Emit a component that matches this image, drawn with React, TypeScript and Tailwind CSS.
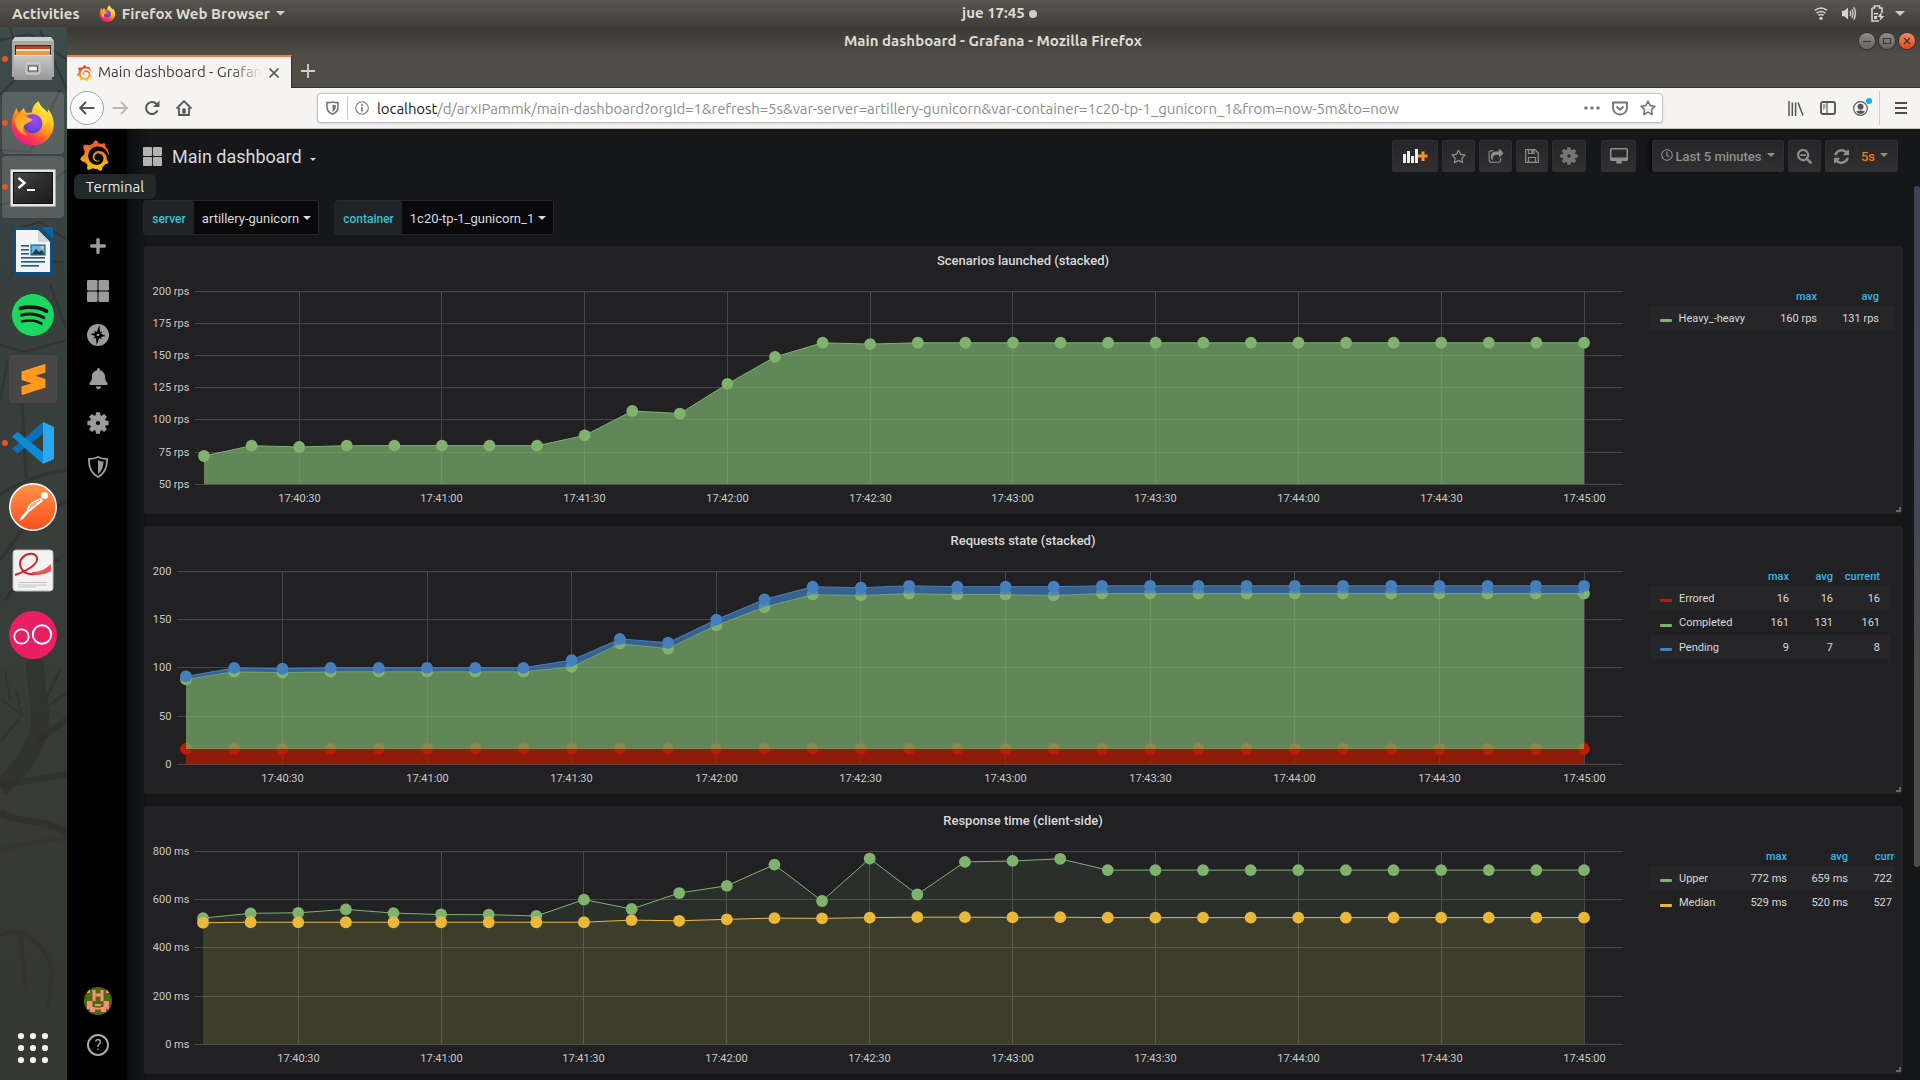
import React from "react";
import { FaRegStar, FaSearchMinus, FaRegClock, FaBell, FaPlus } from "react-icons/fa";
import { SiGrafana, SiSpotify, SiSublimetext } from "react-icons/si";

const UI = "font-['Ubuntu','Open_Sans','Noto_Sans',sans-serif]";

/* ---------- small drawings ---------- */

function Gear({ size, color, hole }: { size: number; color: string; hole: string }) {
  return (
    <svg width={size} height={size} viewBox="-12 -12 24 24">
      {[0, 45, 90, 135, 180, 225, 270, 315].map((a) => (
        <path key={a} d="M-3 -7 L-2.1 -11.6 H2.1 L3 -7Z" fill={color} transform={`rotate(${a})`} />
      ))}
      <circle r="8.6" fill={color} />
      <circle r="2.3" fill={hole} />
    </svg>
  );
}

function Squares({ size, color }: { size: number; color: string }) {
  return (
    <svg width={size} height={size} viewBox="0 0 22 22" fill={color}>
      <rect x="0" y="0" width="10.5" height="10.5" rx="1.3" />
      <rect x="11.5" y="0" width="10.5" height="10.5" rx="1.3" />
      <rect x="0" y="11.5" width="10.5" height="10.5" rx="1.3" />
      <rect x="11.5" y="11.5" width="10.5" height="10.5" rx="1.3" />
    </svg>
  );
}

function FirefoxLogo({ size }: { size: number }) {
  return (
    <svg width={size} height={size} viewBox="30 294 140 144">
      <defs>
        <linearGradient id="ffBody" x1="0.8" y1="0.05" x2="0.25" y2="0.95">
          <stop offset="0" stopColor="#fff44f" />
          <stop offset="0.3" stopColor="#ffc928" />
          <stop offset="0.55" stopColor="#ff8a16" />
          <stop offset="0.78" stopColor="#ff3d45" />
          <stop offset="1" stopColor="#e8198b" />
        </linearGradient>
        <radialGradient id="ffGlobe" cx="0.6" cy="0.3" r="0.8">
          <stop offset="0" stopColor="#a04cf0" />
          <stop offset="0.6" stopColor="#7542e5" />
          <stop offset="1" stopColor="#4a3bbd" />
        </radialGradient>
        <linearGradient id="ffFox" x1="0" y1="0" x2="1" y2="1">
          <stop offset="0" stopColor="#ff9a1c" />
          <stop offset="0.5" stopColor="#ffb52b" />
          <stop offset="1" stopColor="#ff7139" />
        </linearGradient>
      </defs>
      <path d="M48 318 C50 326 53 331 56 335 L72 318 C73 326 76 331 80 334 C88 333 92 334 97 332 C97 318 106 304 118 297 C121 314 136 322 148 334 C146 328 146 326 147 323 C160 338 167 358 165 376 C162 410 134 436 99 436 C62 436 33 408 33 372 C33 350 40 333 48 318Z" fill="url(#ffBody)" />
      <circle cx="99" cy="368" r="30" fill="url(#ffGlobe)" />
      <path d="M42 352 C52 338 68 338 78 346 C86 350 92 351 99 356 C95 363 86 363 82 367 C73 370 68 378 70 388 C72 396 78 402 86 406 C62 404 44 384 42 352Z" fill="url(#ffFox)" />
      <path d="M112 332 C128 340 138 356 134 376 C142 366 146 350 138 338 C132 328 120 326 112 332Z" fill="#ffd43a" />
    </svg>
  );
}

function GrafanaLogo({ size, id, a, b }: { size: number; id: string; a: string; b: string }) {
  return (
    <>
      <svg width="0" height="0" className="absolute">
        <defs>
          <linearGradient id={id} x1="0" y1="0" x2="0" y2="1">
            <stop offset="0.1" stopColor={a} />
            <stop offset="1" stopColor={b} />
          </linearGradient>
        </defs>
      </svg>
      <SiGrafana size={size} className="shrink-0" style={{ fill: `url(#${id})` }} />
    </>
  );
}

function Caret({ color, w = 8 }: { color: string; w?: number }) {
  return (
    <svg width={w} height={w / 2} viewBox="0 0 8 4" className="shrink-0">
      <path d="M0 0H8L4 4Z" fill={color} />
    </svg>
  );
}

/* ---------- dock ---------- */

function FilesIcon() {
  return (
    <svg width="42" height="44" viewBox="0 0 42 44">
      <defs>
        <linearGradient id="fileG" x1="0" y1="0" x2="0" y2="1">
          <stop offset="0" stopColor="#c9c9c9" />
          <stop offset="1" stopColor="#979797" />
        </linearGradient>
      </defs>
      <path d="M3 0H39L42 4V40H0V4Z" fill="#a9a9a9" />
      <path d="M3 0H39L41.5 4H0.5Z" fill="#cfcfcf" />
      <rect x="3" y="8" width="36" height="12" fill="#2f2a26" />
      <rect x="4" y="9" width="34" height="9" fill="#b3471b" />
      <rect x="4" y="12" width="34" height="3" fill="#f3e6d3" />
      <rect x="4" y="14" width="34" height="4" fill="#ee9a3c" />
      <rect x="2" y="18" width="38" height="25" rx="1" fill="url(#fileG)" />
      <rect x="2" y="18" width="38" height="1" fill="#e4e4e4" />
      <rect x="14" y="26" width="14" height="11" rx="2" fill="#b4b4b4" stroke="#d6d6d6" />
      <rect x="16.5" y="29" width="9" height="5" fill="#f0f0f0" stroke="#4c4c4c" />
    </svg>
  );
}

function TerminalIcon() {
  return (
    <svg width="46" height="38" viewBox="0 0 46 38" className="mt-[2px]">
      <defs>
        <linearGradient id="termG" x1="0" y1="0" x2="1" y2="1">
          <stop offset="0" stopColor="#4a4a4a" />
          <stop offset="0.5" stopColor="#2d2d2d" />
          <stop offset="1" stopColor="#1c1c1c" />
        </linearGradient>
      </defs>
      <rect x="0.5" y="0.5" width="45" height="37" rx="1" fill="#e4e4e2" stroke="#a8a8a6" />
      <rect x="3.5" y="3.5" width="39" height="31" fill="url(#termG)" stroke="#0f0f0f" />
      <path d="M8.5 9 L14.5 14 L8.5 19" fill="none" stroke="#fff" strokeWidth="2.4" />
      <rect x="17" y="20" width="8" height="2" fill="#fff" />
    </svg>
  );
}

function WriterIcon() {
  return (
    <svg width="40" height="48" viewBox="0 0 40 48">
      <path d="M2 0H26L40 14V45Q40 48 37 48H3Q0 48 0 45V2Q0 0 2 0Z" fill="#0d4f83" />
      <path d="M28 0H40V12Z" fill="#0a63a8" />
      <path d="M3 3H25L37 15V45H3Z" fill="#f4f4f4" />
      <path d="M25 3L37 15H27Q25 15 25 13Z" fill="#d3d6d9" />
      <g fill="#0d5d97">
        <rect x="8" y="18" width="8" height="1.6" />
        <rect x="8" y="22" width="8" height="1.6" />
        <rect x="8" y="26" width="8" height="1.6" />
        <rect x="8" y="30" width="24" height="1.6" />
        <rect x="8" y="34" width="24" height="1.6" />
        <rect x="8" y="38" width="18" height="1.6" />
      </g>
      <rect x="18" y="18" width="14" height="10" fill="#62b3e4" stroke="#0d4f83" />
      <path d="M18.5 27.5L23 22L26 25L29 23L31.5 27.5Z" fill="#2b3b33" />
      <circle cx="29.5" cy="20.5" r="1.5" fill="#f5d142" />
    </svg>
  );
}

function VsCodeIcon() {
  return (
    <svg width="42" height="42" viewBox="0 0 42 42">
      <path d="M31 0L42 5V37L31 42Z" fill="#29a9f2" />
      <path d="M31 0V12L5.5 31.5L0 27Z" fill="#0a70b8" />
      <path d="M31 42V30L5.5 10L0 14.5Z" fill="#0b8ad8" />
    </svg>
  );
}

function PostmanIcon() {
  return (
    <svg width="48" height="48" viewBox="0 0 48 48">
      <defs>
        <linearGradient id="pmG" x1="0" y1="0" x2="0" y2="1">
          <stop offset="0" stopColor="#ff9248" />
          <stop offset="1" stopColor="#f9501f" />
        </linearGradient>
      </defs>
      <circle cx="24" cy="24" r="23.2" fill="url(#pmG)" stroke="#fff" strokeWidth="1.5" />
      <circle cx="35.5" cy="12.5" r="3.6" fill="#fff" />
      <path d="M32 15L34 18L20 29L14 36L10.5 38L12 34L18 27Q18.5 21 25 18Z" fill="#fff" />
      <path d="M31 17L20 26M26 19L21 23.5" stroke="#f9632e" strokeWidth="0.9" />
    </svg>
  );
}

function PdfIcon() {
  return (
    <svg width="42" height="43" viewBox="0 0 42 43" className="-mt-[2px]">
      <rect x="1" y="1" width="40" height="41" rx="3" fill="#f2f2f2" stroke="#b9b9b9" />
      <path d="M3 26C14 22 26 16 25 9C24 4 16 3 11 8C5 14 9 24 18 25C26 26 35 23 39 19" fill="none" stroke="#cf1f27" strokeWidth="2" />
      <path d="M20 23C28 23 34 20 39 15V22C32 26 26 26.5 20 25Z" fill="#e2565b" />
      <path d="M6 33.5H35M6 36H35M6 38H24" stroke="#bdbdbd" strokeWidth="0.9" />
    </svg>
  );
}

function DockItem({ children, running, lit }: { children: React.ReactNode; running?: boolean; lit?: boolean }) {
  return (
    <div className="relative flex h-16 w-[67px] items-center justify-center">
      {lit && <div className="absolute inset-y-px left-[2px] right-[3px] rounded-[4px] bg-white/15" />}
      {running && <div className="absolute left-[2px] top-[29px] size-[6px] rounded-full bg-[#e95420]" />}
      <div className="relative flex items-center justify-center pr-px">{children}</div>
    </div>
  );
}

function Dock() {
  return (
    <aside className="relative flex w-[67px] shrink-0 flex-col overflow-hidden bg-[linear-gradient(#3e4b4b,#37403e_25%,#373d39_60%,#363832_80%,#343630)]">
      <svg className="absolute inset-0" width="67" height="1053" viewBox="0 27 67 1053" fill="none" stroke="#2f2e2a" strokeOpacity="0.6">
        <path d="M0 788C20 770 30 755 38 735C44 715 36 690 34 660" strokeWidth="18" />
        <path d="M38 740C50 730 60 725 70 718M0 784C30 782 50 776 70 774M0 812C12 824 40 816 70 834" strokeWidth="7" />
        <path d="M0 742L22 715L16 690M22 715L2 700M60 670L45 700M70 690L50 705M10 700L5 670" strokeWidth="2" />
        <path d="M0 935C25 925 45 945 52 970L48 1010M20 930L26 990M0 850Q34 840 70 838" strokeWidth="4" strokeOpacity="0.35" />
        <path d="M0 494C25 480 45 472 70 470M22 400L26 478M0 560L30 520L70 500M5 600L26 570L60 560" strokeWidth="3" />
        <path d="M0 40L30 34L67 60M10 27L24 70L0 95M40 30L67 90M0 205L35 196L67 170M12 230L40 222L67 240M0 150L30 152L60 90" strokeWidth="2" />
        <path d="M8 280L20 260L64 262M50 285L67 330M0 345L24 352L67 340M0 400L8 360" strokeWidth="2" />
      </svg>
      <DockItem running><FilesIcon /></DockItem>
      <DockItem running lit><FirefoxLogo size={46} /></DockItem>
      <DockItem running lit><TerminalIcon /></DockItem>
      <DockItem><WriterIcon /></DockItem>
      <DockItem>
        <div className="flex size-[42px] items-center justify-center rounded-full bg-[#191414]">
          <SiSpotify size={42} color="#1ed760" />
        </div>
      </DockItem>
      <DockItem>
        <div className="flex size-12 items-center justify-center rounded-[3px] bg-[#474747]">
          <SiSublimetext size={31} color="#ff9a1f" />
        </div>
      </DockItem>
      <DockItem running><VsCodeIcon /></DockItem>
      <DockItem><PostmanIcon /></DockItem>
      <DockItem><PdfIcon /></DockItem>
      <DockItem>
        <svg width="48" height="48" viewBox="0 0 48 48">
          <circle cx="24" cy="24" r="24" fill="#e91e63" />
          <circle cx="12.5" cy="25.5" r="7.2" fill="none" stroke="#fff" strokeWidth="1.7" />
          <circle cx="33" cy="23.5" r="9.2" fill="none" stroke="#fff" strokeWidth="1.9" />
        </svg>
      </DockItem>
      <div className="relative mt-auto flex h-12 items-start justify-center pr-px">
        <svg width="32" height="32" viewBox="-16 -16 32 32" fill="#f0f0ee">
          {[-12, 0, 12].map((y) => [-12, 0, 12].map((x) => <circle key={`${x}${y}`} cx={x} cy={y} r="3.1" />))}
        </svg>
      </div>
    </aside>
  );
}

/* ---------- system top bar ---------- */

function TopBar() {
  return (
    <header className={`${UI} relative flex h-[27px] shrink-0 items-center bg-[linear-gradient(#59564e,#3f3e39)] text-[15px] font-semibold text-[#dfdbd2]`}>
      <span className="ml-3 pt-px tracking-[0.1px]">Activities</span>
      <span className="ml-[19px] flex"><FirefoxLogo size={17} /></span>
      <span className="ml-[6px] pt-px tracking-[0.05px]">Firefox Web Browser</span>
      <span className="ml-[6px]"><Caret color="#d0ccc4" w={9} /></span>
      <div className="absolute left-[962px] flex items-center gap-1">
        <span>jue 17:45</span>
        <span className="size-2 rounded-full bg-[#cfccc6]" />
      </div>
      <div className="ml-auto flex items-center pr-[15px]">
        <svg width="14" height="15" viewBox="0 0 16 16" fill="none" stroke="#d6d3cc" strokeWidth="1.7">
          <path d="M1 4.5Q8 -1 15 4.5M3 7.5Q8 3.7 13 7.5M5 10.2Q8 8.1 11 10.2" />
          <circle cx="8" cy="13.5" r="1.9" fill="#d6d3cc" stroke="none" />
        </svg>
        <svg width="16" height="15" viewBox="0 0 16 16" className="ml-[13px]" fill="none" stroke="#d6d3cc" strokeWidth="1.5">
          <path d="M0.5 5H3L7 1.5V14.5L3 11H0.5Z" fill="#d6d3cc" stroke="none" />
          <path d="M9 5.5Q10.5 8 9 10.5M11 3.5Q13.5 8 11 12.5M13 1.5Q16.8 8 13 14.5" />
        </svg>
        <svg width="14" height="17" viewBox="0 0 14 17" className="ml-[14px]">
          <path d="M1 3H3.5V1H8.5V3H11V8M1 3V16H8" fill="none" stroke="#d6d3cc" strokeWidth="1.6" />
          <path d="M3 8H7V9.5H3ZM3 11H6V14H3Z" fill="#d6d3cc" />
          <path d="M10.5 7L6.5 12H9.5L8.5 16L13.5 11H10.5Z" fill="#d6d3cc" />
        </svg>
        <span className="ml-[10px]"><Caret color="#d0ccc4" w={10} /></span>
      </div>
    </header>
  );
}

/* ---------- browser chrome ---------- */

function WinButton({ close, children }: { close?: boolean; children: React.ReactNode }) {
  return (
    <span className={`flex size-4 items-center justify-center rounded-full ${close ? "bg-[linear-gradient(#f58b66,#df4716)]" : "bg-[linear-gradient(#8f8d87,#65635d)]"} shadow-[0_0_0_1px_#33322e]`}>
      <svg width="16" height="16" viewBox="0 0 16 16" fill="none" stroke="#3a3935" strokeWidth="1.2">{children}</svg>
    </span>
  );
}

function TitleAndTabs() {
  return (
    <div className={`${UI} relative flex h-[61px] shrink-0 flex-col bg-[linear-gradient(#3a3935,#504d46_46%,#504d46)]`}>
      <div className="flex h-7 items-center">
        <span className="ml-[777px] text-[15px] font-bold tracking-[0.02px] text-[#dfdbd2]">Main dashboard - Grafana - Mozilla Firefox</span>
        <div className="ml-auto flex items-center gap-1 pr-[5px]">
          <WinButton><path d="M4 8.5H12" /></WinButton>
          <WinButton><path d="M4.5 5.5H11.5V10.5H4.5Z" /></WinButton>
          <WinButton close><path d="M5 5L11 11M11 5L5 11" /></WinButton>
        </div>
      </div>
      <div className="flex h-[33px] border-b border-[#34332f]">
        <div className="z-10 -mb-px flex w-[225px] shrink-0 items-center border-r border-t-2 border-r-[#34332f] border-t-[#f07746] bg-[#f5f4f2] pl-[9px]">
          <GrafanaLogo size={16} id="tabLogo" a="#f0322a" b="#fbd616" />
          <div className="ml-[6px] w-[166px] overflow-hidden whitespace-nowrap text-[15px] text-[#3d3d3d] [mask-image:linear-gradient(90deg,#000_134px,transparent_164px)]">
            Main dashboard - Grafana
          </div>
          <svg width="10" height="10" viewBox="0 0 10 10" className="ml-[5px] shrink-0" stroke="#595959" strokeWidth="1.6"><path d="M0.5 0.5L9.5 9.5M9.5 0.5L0.5 9.5" /></svg>
        </div>
        <svg width="14" height="14" viewBox="0 0 14 14" className="ml-[9px] mt-[9px]" stroke="#d3d0c9" strokeWidth="1.8"><path d="M7 0V14M0 7H14" /></svg>
      </div>
    </div>
  );
}

function NavBar() {
  return (
    <div className={`${UI} flex h-[41px] shrink-0 items-center border-b border-[#c9c7c4] bg-[#f5f4f2]`}>
      <div className="ml-[3px] flex size-[34px] items-center justify-center rounded-full border border-[#a5a4a2] bg-[#fbfbfb]">
        <svg width="16" height="14" viewBox="0 0 16 14" fill="none" stroke="#565655" strokeWidth="1.9"><path d="M15.5 7H1.5M7 1L1.2 7L7 13" /></svg>
      </div>
      <svg width="16" height="14" viewBox="0 0 16 14" className="ml-[8px]" fill="none" stroke="#bab9b8" strokeWidth="1.9"><path d="M0.5 7H14.5M9 1L14.8 7L9 13" /></svg>
      <svg width="16" height="16" viewBox="0 0 16 16" className="ml-[16px]" fill="none" stroke="#565655" strokeWidth="2">
        <path d="M13.5 10.5A6 6 0 1 1 12.5 4" /><path d="M15.5 0.5V7H9Z" fill="#565655" stroke="none" />
      </svg>
      <svg width="16" height="16" viewBox="0 0 16 16" className="ml-[16px]" fill="none" stroke="#565655" strokeWidth="1.8">
        <path d="M0.5 8.5L8 1.2L15.5 8.5" /><path d="M3 7.5V15H13V7.5" /><rect x="6.8" y="9" width="2.4" height="4" fill="#565655" strokeWidth="1" />
      </svg>
      <div className="ml-[125px] flex h-[30px] w-[1346px] items-center rounded-[4px] border border-[#c4c2bf] bg-white shadow-sm">
        <svg width="13" height="14" viewBox="0 0 13 14" className="ml-[8px]"><path d="M6.5 1Q9 1.8 12 1.6V6Q12 11 6.5 13.2Q1 11 1 6V1.6Q4 1.8 6.5 1Z" fill="none" stroke="#777" strokeWidth="1.6" /><path d="M6.5 3.5Q8 4 9.8 4V6.5Q9.5 9.5 6.5 11Z" fill="#777" /></svg>
        <div className="ml-2 h-[22px] w-px bg-[#c9c9c9]" />
        <svg width="14" height="14" viewBox="0 0 14 14" className="ml-[7px]" fill="none" stroke="#777" strokeWidth="1.1"><circle cx="7" cy="7" r="6.3" /><path d="M7 6V10.5M7 3.3V5" strokeWidth="1.7" /></svg>
        <span className="ml-[8px] whitespace-nowrap pt-[3px] text-[15px] tracking-[-0.08px] text-[#8d8d8d]"><span className="text-[#1a1a1a]">localhost</span>/d/arxIPammk/main-dashboard?orgId=1&amp;refresh=5s&amp;var-server=artillery-gunicorn&amp;var-container=1c20-tp-1_gunicorn_1&amp;from=now-5m&amp;to=now</span>
        <div className="ml-auto flex items-center pr-[6px]">
          <svg width="16" height="4" viewBox="0 0 16 4" fill="#777"><circle cx="2" cy="2" r="1.8" /><circle cx="8" cy="2" r="1.8" /><circle cx="14" cy="2" r="1.8" /></svg>
          <svg width="16" height="15" viewBox="0 0 16 15" className="ml-3" fill="none" stroke="#777" strokeWidth="1.9"><path d="M1 1.5H15V7A7 6.5 0 0 1 1 7Z" /><path d="M4.5 5.5L8 8.8L11.5 5.5" /></svg>
          <svg width="16" height="16" viewBox="0 0 16 16" className="ml-3" fill="none" stroke="#777" strokeWidth="1.6" strokeLinejoin="round"><path d="M8 1.2L10.1 5.6L15 6.2L11.4 9.6L12.3 14.5L8 12.1L3.7 14.5L4.6 9.6L1 6.2L5.9 5.6Z" /></svg>
        </div>
      </div>
      <div className="ml-auto flex items-center text-[#565655]">
        <svg width="16" height="15" viewBox="0 0 16 15" stroke="#565655" strokeWidth="1.5"><path d="M1 0V15M4.3 1.5V15M7.6 1.5V15M10 1.5L15 14.5" /></svg>
        <svg width="16" height="14" viewBox="0 0 16 14" className="ml-[16px]" fill="none" stroke="#565655"><rect x="1" y="1" width="14" height="12" rx="2" strokeWidth="1.9" /><path d="M7 1V13M3 4H5.5M3 6H5.5M3 8H4.5" strokeWidth="1.1" /></svg>
        <div className="relative ml-[17px] flex">
          <svg width="15" height="15" viewBox="0 0 15 15" fill="none" stroke="#565655"><circle cx="7.5" cy="7.5" r="6.8" strokeWidth="1.2" /><circle cx="7.5" cy="5.8" r="3" fill="#565655" stroke="none" /><path d="M3 10.5Q7.5 8.5 12 10.5Q10 13 7.5 13Q5 13 3 10.5Z" fill="#565655" stroke="none" /></svg>
          <span className="absolute -right-1 -top-[3px] size-[6px] rounded-full bg-[#00b3f4]" />
        </div>
        <div className="ml-[11px] h-[34px] w-px bg-[#d0cecb]" />
        <svg width="12" height="12" viewBox="0 0 12 12" className="ml-[15px] mr-[13px]" stroke="#4c4c4b" strokeWidth="1.9"><path d="M0 1H12M0 6H12M0 11H12" /></svg>
      </div>
    </div>
  );
}

/* ---------- grafana side menu ---------- */

function SideItem({ children }: { children: React.ReactNode }) {
  return <div className="flex h-11 w-full items-center justify-center pl-[2px]">{children}</div>;
}

function SideMenu() {
  return (
    <nav className="relative flex w-[60px] shrink-0 flex-col bg-black">
      <div className="flex h-24 justify-center pr-[5px] pt-[11px]">
        <GrafanaLogo size={31} id="sideLogo" a="#f05a28" b="#fbca0a" />
      </div>
      <SideItem><FaPlus size={18} color="#9b9b9b" className="-mt-[3px]" /></SideItem>
      <SideItem><Squares size={22} color="#9b9b9b" /></SideItem>
      <SideItem>
        <svg width="22" height="22" viewBox="-11 -11 22 22"><circle r="11" fill="#9b9b9b" /><path d="M0 -10L1.9 -1.9L8 0L1.9 1.9L0 10L-1.9 1.9L-8 0L-1.9 -1.9Z" transform="rotate(8)" fill="#000" /><path d="M0 -6L1.5 -1.5L6 0L1.5 1.5L0 6L-1.5 1.5L-6 0L-1.5 -1.5Z" transform="rotate(50)" fill="#000" /><circle r="1.3" fill="#9b9b9b" /></svg>
      </SideItem>
      <SideItem><FaBell size={21} color="#9b9b9b" className="-mt-[2px]" /></SideItem>
      <SideItem><Gear size={22} color="#9b9b9b" hole="#000" /></SideItem>
      <SideItem>
        <svg width="20" height="22" viewBox="0 0 20 22"><path d="M10 1Q14 3 19 3Q19.5 16 10 21Q0.5 16 1 3Q6 3 10 1Z" fill="none" stroke="#9b9b9b" strokeWidth="1.9" /><path d="M10 4Q12.5 5.5 15.5 5.5Q15.5 14 10 18Z" fill="#9b9b9b" /></svg>
      </SideItem>
      <div className="mt-auto flex h-11 items-center justify-center pl-[2px]">
        <svg width="28" height="28" viewBox="0 0 28 28">
          <clipPath id="avatar"><circle cx="14" cy="14" r="14" /></clipPath>
          <g clipPath="url(#avatar)">
            <rect width="28" height="28" fill="#4b6b0a" />
            <g fill="#f58f7c">
              <path d="M3 3H6V6H3ZM22 3H25V6H22ZM8.5 3H11.5V6.5H16.5V3H19.5V14H16.5V9.5H11.5V14H8.5Z" />
              <path d="M3 14H8.5V20H11V17H17V20H19.5V14H25V22H22V25H17V22.5H11V25H6V22H3Z" />
            </g>
            <rect x="11" y="19" width="6" height="1.5" fill="#4b6b0a" />
          </g>
        </svg>
      </div>
      <div className="mb-[13px] flex h-11 items-center justify-center pl-[2px]">
        <div className="flex size-[22px] items-center justify-center rounded-full border-2 border-[#a8a8a8] font-[Roboto] text-[15px] font-normal leading-none text-[#b0b0b0]">?</div>
      </div>
      <div className={`${UI} absolute left-[7px] top-[45px] z-20 flex h-[25px] w-[82px] items-center justify-center rounded-[6px] bg-[#22282a] pt-px text-[15px] text-[#e8e8e8]`}>Terminal</div>
    </nav>
  );
}

/* ---------- dashboard ---------- */

const BTN = "flex h-8 items-center justify-center rounded-[2px] border border-[#2f2f32] bg-[linear-gradient(#262628,#303032)]";

function Toolbar() {
  return (
    <div className="flex items-center text-[#8e8e8e]">
      <div className={`${BTN} w-[46px]`}>
        <svg width="25" height="18" viewBox="0 0 25 18"><path d="M0 7H3V16H0ZM4 4H7V16H4ZM8 9H11V16H8ZM12 2H15V16H12Z" fill="#ececec" /><path d="M18.5 4.5H21.5V7.5H24.5V10.5H21.5V14H18.5V10.5H15V7.5H18.5Z" fill="#f7941e" /></svg>
      </div>
      <div className={`${BTN} ml-1 w-[33px]`}><FaRegStar size={15} /></div>
      <div className={`${BTN} ml-1 w-[33px]`}>
        <svg width="16" height="14" viewBox="0 0 1792 1536" fill="#8e8e8e"><path d="M1472 989v259q0 119-84.5 203.5T1184 1536H352q-119 0-203.5-84.5T64 1248V416q0-119 84.5-203.5T352 128h255q13 0 22.5 9.5T639 160q0 27-26 32-77 26-133 60-10 4-16 4H352q-66 0-113 47t-47 113v832q0 66 47 113t113 47h832q66 0 113-47t47-113v-214q0-19 18-29 28-13 54-37 16-16 35-8 21 9 21 29zm237-496l-384 384q-18 19-45 19-12 0-25-5-39-17-39-59V640h-160q-323 0-438 131-119 137-74 473 3 23-20 34-8 2-12 2-16 0-26-13-10-14-21-31t-39.5-68.5-49.5-99.5-38.5-114T320 832q0-49 3.5-91t14-90 28-88 47-81.5 68.5-74 94.5-61.5 124.5-48.5 159.5-30.5 196.5-11h160V64q0-42 39-59 13-5 25-5 26 0 45 19l384 384q19 19 19 45t-19 45z" /></svg>
      </div>
      <div className={`${BTN} ml-1 w-8`}>
        <svg width="14" height="14" viewBox="0 0 14 14" fill="none" stroke="#8e8e8e" strokeWidth="1.2"><path d="M0.7 0.7H10L13.3 4V13.3H0.7ZM3.5 0.7V4.5H9V0.7M3.5 13V8.5H10.5V13" /><path d="M6.5 1.5H8V3.5H6.5Z" fill="#8e8e8e" strokeWidth="0.5" /></svg>
      </div>
      <div className={`${BTN} ml-1 w-[34px]`}><Gear size={18} color="#757575" hole="#2b2b2d" /></div>
      <div className={`${BTN} ml-[15px] w-[35px]`}>
        <svg width="18" height="16" viewBox="0 0 18 16"><path d="M1.8 0H16.2Q18 0 18 1.5V11.5Q18 13 16.2 13H1.8Q0 13 0 11.5V1.5Q0 0 1.8 0ZM1.5 1.5V9.5H16.5V1.5Z" fill="#8e8e8e" fillRule="evenodd" /><path d="M6.5 13H11.5L12 15.5H6Z" fill="#8e8e8e" /></svg>
      </div>
      <div className={`${BTN} ml-4 w-[132px] pr-px shadow-[-3px_0_3px_#0b0c0e]`}>
        <FaRegClock size={12} className="-mt-[3px]" /><span className="ml-[3px] pt-px font-[Roboto] text-[13px] font-medium">Last 5 minutes</span><span className="-mt-[3px] ml-[5px] flex"><Caret color="#8e8e8e" /></span>
      </div>
      <div className={`${BTN} ml-1 w-[33px]`}><FaSearchMinus size={15} /></div>
      <div className={`${BTN} ml-1 w-8 rounded-r-none border-r-0`}>
        <svg width="15" height="15" viewBox="0 0 1536 1536" fill="#8e8e8e"><path d="M1511 928q0 5-1 7-64 268-268 434.5T764 1536q-146 0-282.5-55T238 1324l-129 129q-19 19-45 19t-45-19-19-45V960q0-26 19-45t45-19h448q26 0 45 19t19 45-19 45l-137 137q71 66 161 102t187 36q134 0 250-65t186-179q11-17 53-117 8-23 30-23h192q13 0 22.5 9.5t9.5 22.5zm25-800v448q0 26-19 45t-45 19h-448q-26 0-45-19t-19-45 19-45l138-138Q969 256 768 256q-134 0-250 65T332 500q-11 17-53 117-8 23-30 23H50q-13 0-22.5-9.5T18 608v-7q65-268 270-434.5T768 0q146 0 284 55.5T1297 212l130-129q19-19 45-19t45 19 19 45z" /></svg>
      </div>
      <div className={`${BTN} w-[41px] rounded-l-none pr-[6px] font-[Roboto] text-[13px] font-medium text-[#eb7b18]`}><span className="pt-px">5s</span><span className="-mt-[3px] ml-[5px] flex"><Caret color="#8e8e8e" /></span></div>
    </div>
  );
}

function Variable({ label, value, lw, vw }: { label: string; value: string; lw: string; vw: string }) {
  return (
    <div className="flex h-[35px] overflow-hidden rounded-[3px] border border-[#26272a] font-[Roboto]">
      <div className={`flex ${lw} items-center justify-center bg-[#202226] pt-[2px] text-[12px] font-medium text-[#33c1cf]`}>{label}</div>
      <div className={`flex ${vw} items-center justify-center gap-1 bg-[#09090b] pl-px pt-[2px] text-[13px] text-[#d8d9da]`}>{value}<span className="-mt-[2px] flex"><Caret color="#d8d9da" w={8} /></span></div>
    </div>
  );
}

type Series = { color: string; values: number[] };
type ChartProps = {
  left: number; first: number; min: number; max: number;
  ticks: string[]; labelX: number; series: Series[]; fill: number; stacked?: boolean;
};

const TIMES = ["17:40:30", "17:41:00", "17:41:30", "17:42:00", "17:42:30", "17:43:00", "17:43:30", "17:44:00", "17:44:30", "17:45:00"];
const rep = (v: number, n: number) => Array<number>(n).fill(v);

function Chart({ left, first, min, max, ticks, labelX, series, fill, stacked }: ChartProps) {
  const top = 45.3;
  const bottom = 238.3;
  const step = (1440 - first) / 29;
  const X = (i: number) => first + i * step;
  const Y = (v: number) => bottom - ((v - min) / (max - min)) * (bottom - top);
  return (
    <svg width="1506" height="238" viewBox="0 28 1506 238" className="shrink-0 font-[Roboto]">
      {ticks.map((t, i) => {
        const y = Math.floor(top + ((bottom - top) * i) / (ticks.length - 1)) + 0.5;
        return (
          <g key={t}>
            <path d={`M${left} ${y}H1479`} stroke="#48484a" />
            <text x={labelX + 0.4} y={y + 3.5} textAnchor="end" fontSize="11" fill="#c8c9ca">{t}</text>
          </g>
        );
      })}
      {TIMES.map((t, k) => {
        const x = Math.floor(X(2 + 3 * k)) + 0.5;
        return (
          <g key={t}>
            <path d={`M${x} ${top}V${bottom}`} stroke="#48484a" />
            <text x={x} y={256} textAnchor="middle" fontSize="11" fill="#c8c9ca">{t}</text>
          </g>
        );
      })}
      {series.map((s, si) => {
        const base = stacked && si > 0 ? series[si - 1].values : null;
        const line = s.values.map((v, i) => `${X(i).toFixed(1)} ${Y(v).toFixed(1)}`);
        const back = s.values.map((_, i) => `${X(i).toFixed(1)} ${Y(base ? base[i] : min).toFixed(1)}`).reverse();
        return (
          <g key={s.color}>
            <path d={`M${line.join("L")}L${back.join("L")}Z`} fill={s.color} fillOpacity={fill} />
            <path d={`M${line.join("L")}`} fill="none" stroke={s.color} strokeWidth="1" />
            {s.values.map((v, i) => <circle key={i} cx={X(i)} cy={Y(v)} r="5.9" fill={s.color} />)}
          </g>
        );
      })}
    </svg>
  );
}

type LegendProps = {
  width: string; cols: { label: string; w: string }[];
  rows: { color: string; name: string; values: string[] }[];
};

function Legend({ width, cols, rows }: LegendProps) {
  return (
    <div className="mt-[11px] flex w-[245px] shrink-0 flex-col overflow-hidden whitespace-nowrap font-[Roboto] text-[11px] text-[#d8d9da]">
      <div className="flex h-[21px] items-center pt-[3px] font-medium text-[#33b5e5]">
        <span className="w-[95px] shrink-0" />
        {cols.map((c) => <span key={c.label} className={`${c.w} shrink-0 text-right`}>{c.label}</span>)}
      </div>
      {rows.map((r, i) => (
        <div key={r.name} className={`flex h-[24.4px] items-center pt-[2px] ${width} ${i % 2 === 0 ? "bg-[#262628]" : ""}`}>
          <span className="flex w-[95px] shrink-0 items-center">
            <span className="ml-[10px] mt-[3px] h-[3px] w-3 rounded-[1px]" style={{ backgroundColor: r.color }} />
            <span className="ml-[7px]">{r.name}</span>
          </span>
          {r.values.map((v, k) => <span key={k} className={`${cols[k].w} shrink-0 text-right`}>{v}</span>)}
        </div>
      ))}
    </div>
  );
}

function Panel({ title, chart, legend }: { title: string; chart: ChartProps; legend: LegendProps }) {
  return (
    <section className="relative flex h-[268px] w-[1759px] flex-col rounded-[3px] bg-[#212124] shadow-[0_0_0_1px_#141414]">
      <h2 className="flex h-7 items-center justify-center pr-px pt-[2px] font-[Roboto] text-[13px] font-medium text-[#d8d9da]">{title}</h2>
      <div className="flex">
        <Chart {...chart} />
        <Legend {...legend} />
      </div>
      <svg width="5" height="5" viewBox="0 0 5 5" className="absolute bottom-[2px] right-[2px]"><path d="M5 0V5H0V3H3V0Z" fill="#666668" /></svg>
    </section>
  );
}

const GREEN = "#7eb26d";
const panels: { title: string; chart: ChartProps; legend: LegendProps }[] = [
  {
    title: "Scenarios launched (stacked)",
    chart: {
      left: 51, first: 60, min: 50, max: 200, labelX: 45, fill: 0.7, stacked: true,
      ticks: ["200 rps", "175 rps", "150 rps", "125 rps", "100 rps", "75 rps", "50 rps"],
      series: [{ color: GREEN, values: [72, 80, 79, ...rep(80, 5), 88, 107, 105, 128, 149, 160, 159, ...rep(160, 15)] }],
    },
    legend: {
      width: "w-[245px]",
      cols: [{ label: "max", w: "w-[72px]" }, { label: "avg", w: "w-[62px]" }],
      rows: [{ color: GREEN, name: "Heavy_-heavy", values: ["160 rps", "131 rps"] }],
    },
  },
  {
    title: "Requests state (stacked)",
    chart: {
      left: 33, first: 42, min: 0, max: 200, labelX: 27, fill: 0.7, stacked: true,
      ticks: ["200", "150", "100", "50", "0"],
      series: [
        { color: "#bf1b00", values: rep(16, 30) },
        { color: GREEN, values: [88, 96, 95, ...rep(96, 5), 101, 125, 120, 144, 163, 176, 175, 177, 176, 176, 175, ...rep(177, 11)] },
        { color: "#447ebc", values: [91, 100, 99, ...rep(100, 5), 108, 130, 126, 150, 171, 184, 183, 185, 184, 184, 184, ...rep(185, 11)] },
      ],
    },
    legend: {
      width: "w-[240px]",
      cols: [{ label: "max", w: "w-[44px]" }, { label: "avg", w: "w-[44px]" }, { label: "current", w: "w-[47px]" }],
      rows: [
        { color: "#bf1b00", name: "Errored", values: ["16", "16", "16"] },
        { color: GREEN, name: "Completed", values: ["161", "131", "161"] },
        { color: "#447ebc", name: "Pending", values: ["9", "7", "8"] },
      ],
    },
  },
  {
    title: "Response time (client-side)",
    chart: {
      left: 50, first: 59, min: 0, max: 800, labelX: 45, fill: 0.1,
      ticks: ["800 ms", "600 ms", "400 ms", "200 ms", "0 ms"],
      series: [
        { color: GREEN, values: [523, 543, 545, 559, 544, 538, 537, 532, 600, 561, 627, 657, 745, 594, 770, 621, 756, 760, 769, ...rep(722, 11)] },
        { color: "#eab839", values: [504, ...rep(506, 7), 506, 515, 512, 518, 523, 522, 525, 527, 527, 526, 527, ...rep(525, 11)] },
      ],
    },
    legend: {
      width: "w-[280px]",
      cols: [{ label: "max", w: "w-[42px]" }, { label: "avg", w: "w-[61px]" }, { label: "current", w: "w-[62px]" }],
      rows: [
        { color: GREEN, name: "Upper", values: ["772 ms", "659 ms", "722 ms"] },
        { color: "#eab839", name: "Median", values: ["529 ms", "520 ms", "527 ms"] },
      ],
    },
  },
];

function Dashboard() {
  return (
    <main className="relative flex min-w-0 flex-1 flex-col bg-[linear-gradient(90deg,#0c0d0e,#161719_22px)] pl-4">
      <div className="flex h-[55px] items-start pr-[22px] pt-[11px]">
        <div className="flex h-8 items-center">
          <Squares size={19} color="#b3b3b3" />
          <span className="ml-[10px] font-[Roboto] text-[18px] text-[#d8d9da]">Main dashboard</span>
          <span className="ml-2 mt-[6px] flex"><Caret color="#d8d9da" w={6} /></span>
        </div>
        <div className="ml-auto"><Toolbar /></div>
      </div>
      <div className="mt-4 flex gap-[15px]">
        <Variable label="server" value="artillery-gunicorn" lw="w-[50px]" vw="w-[124px]" />
        <Variable label="container" value="1c20-tp-1_gunicorn_1" lw="w-[67px]" vw="w-[151px]" />
      </div>
      <div className="ml-px mt-[11px] flex flex-col gap-3">
        {panels.map((p) => <Panel key={p.title} {...p} />)}
      </div>
      <div className="absolute right-0 top-[57px] h-[681px] w-[6px] rounded-[3px] bg-[linear-gradient(#404056,#464658_45%,#48484a_60%,#4d4d4d)]" />
    </main>
  );
}

export default function App() {
  return (
    <div className="flex h-[1080px] w-[1920px] flex-col overflow-hidden bg-[#161719]">
      <TopBar />
      <div className="flex min-h-0 flex-1">
        <Dock />
        <div className="flex min-w-0 flex-1 flex-col">
          <TitleAndTabs />
          <NavBar />
          <div className="flex min-h-0 flex-1">
            <SideMenu />
            <Dashboard />
          </div>
        </div>
      </div>
    </div>
  );
}
